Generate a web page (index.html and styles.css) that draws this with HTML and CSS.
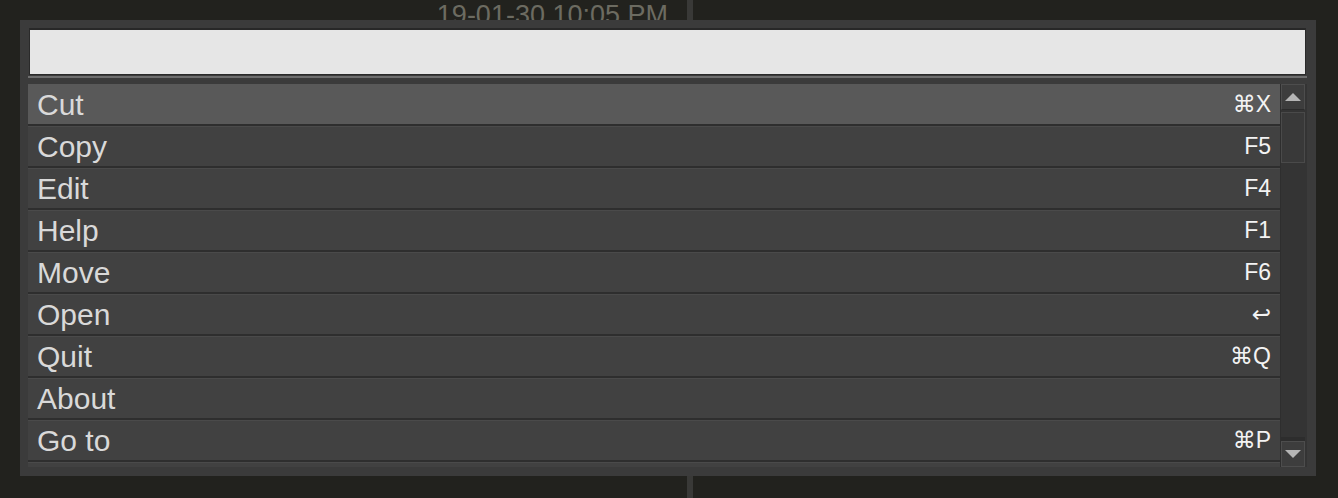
FILE: index.html
```html
<!DOCTYPE html>
<html>
<head>
    <meta charset='utf-8'>
    <title>Commands</title>
    <link rel="stylesheet" href="styles.css">
</head>

<body>
    <div class="desk">
        <div class="col left"><span class="stamp">19-01-30 10:05 PM</span></div>
        <div class="split"></div>
        <div class="col right"></div>
    </div>

    <div class="palette">
        <div class="search"><input type="text" class="q" aria-label="command"></div>
        <div class="rule"></div>
        <div class="list">
            <div class="rows">
                <div class="row sel"><span>Cut</span><kbd>⌘X</kbd></div>
                <div class="row"><span>Copy</span><kbd>F5</kbd></div>
                <div class="row"><span>Edit</span><kbd>F4</kbd></div>
                <div class="row"><span>Help</span><kbd>F1</kbd></div>
                <div class="row"><span>Move</span><kbd>F6</kbd></div>
                <div class="row"><span>Open</span><kbd>↩</kbd></div>
                <div class="row"><span>Quit</span><kbd>⌘Q</kbd></div>
                <div class="row"><span>About</span><kbd></kbd></div>
                <div class="row"><span>Go to</span><kbd>⌘P</kbd></div>
                <div class="row"></div>
            </div>
            <div class="bar">
                <div class="btn up"></div>
                <div class="thumb"></div>
                <div class="track"></div>
                <div class="btn down"></div>
            </div>
        </div>
    </div>
</body>

</html>
```

FILE: styles.css
```css
html, body {
    margin: 0;
    height: 100%;
    background: #22221e;
    font-family: "Liberation Sans", Arial, sans-serif;
    overflow: hidden;
}

.desk {
    display: flex;
    height: 100%;
}

.col.left {
    width: 687px;
    display: flex;
    justify-content: flex-end;
    padding-right: 19px;
    box-sizing: border-box;
}

.stamp {
    font-size: 27px;
    line-height: 30px;
    color: #6c6b61;
    white-space: nowrap;
}

.split {
    width: 6px;
    background: #393937;
}

.col.right { flex: 1; }

/* the popup sits over the desk */
.palette {
    position: absolute;
    left: 20px;
    top: 20px;
    width: 1296px;
    height: 456px;
    box-sizing: border-box;
    padding: 8px 9px 9px 8px;
    background: #3b3b3b;
    display: flex;
    flex-direction: column;
}

.search {
    padding: 0 1px;
}

.q {
    display: block;
    width: 100%;
    height: 47px;
    box-sizing: border-box;
    margin: 0;
    border: none;
    border-top: 2px solid #282828;
    border-left: 1px solid #2a2a2a;
    border-right: 1px solid #2a2a2a;
    border-bottom: 1px solid #2a2a2a;
    background: #e6e6e6;
    outline: none;
}

.rule {
    height: 2px;
    margin: 1px 0 6px;
    background: #6e6e6e;
}

.list {
    height: 383px;
    display: flex;
    overflow: hidden;
}

.rows {
    flex: 1;
    overflow: hidden;
}

.row {
    height: 40px;
    border-bottom: 2px solid #2e2e2e;
    background: #414141;
    display: flex;
    align-items: center;
    justify-content: space-between;
    padding: 0 9px;
    color: #d9d9d9;
    font-size: 30px;
    line-height: 40px;
    box-shadow: inset 0 1px #4a4a4a;
}

.row span { padding-top: 1px; }

.row.sel {
    background: #595959;
    box-shadow: none;
}

.row kbd {
    font-family: "Liberation Sans", "DejaVu Sans", sans-serif;
    font-size: 23px;
    color: #f3f3f3;
}

.bar {
    width: 27px;
    box-sizing: border-box;
    border-left: 1px solid #2e2e2e;
    background: #343434;
    display: flex;
    flex-direction: column;
}

.btn {
    height: 26px;
    box-sizing: border-box;
    border: 1px solid #4d4d4d;
    background: #3d3d3d;
    display: flex;
    align-items: center;
    justify-content: center;
    margin-right: 2px;
}

.btn::before {
    content: "";
    border-left: 8px solid transparent;
    border-right: 8px solid transparent;
}

.up::before { border-bottom: 8px solid #b5b5b5; }
.down::before { border-top: 8px solid #b5b5b5; }

.up { border-bottom-color: #2c2c2c; }

.thumb {
    height: 51px;
    margin: 2px 2px 0 0;
    box-sizing: border-box;
    border: 1px solid #4a4a4a;
    background: #393939;
}

.track {
    flex: 1;
    margin-right: 2px;
    background: #343434;
    border-bottom: 4px solid #2d2d2d;
}
```
